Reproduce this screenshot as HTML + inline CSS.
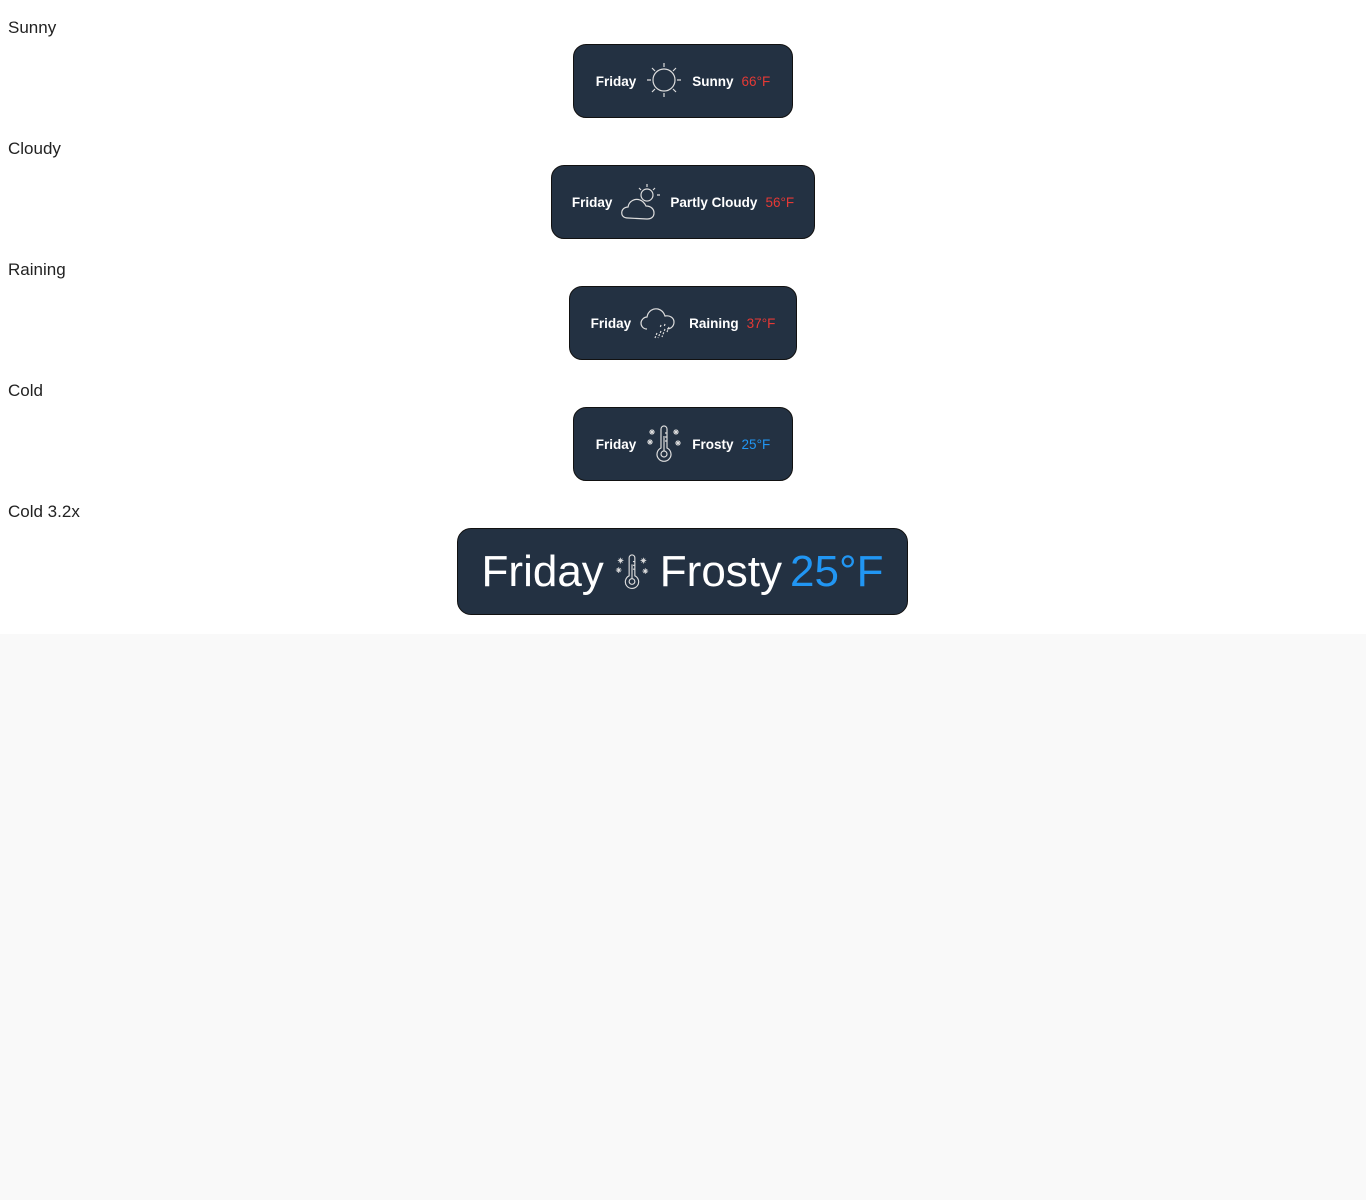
<!DOCTYPE html>
<html><head><meta charset="utf-8"><style>
html,body{margin:0;padding:0;background:#f9f9f9;}
#wrap{position:relative;width:1366px;height:634px;background:#fff;}
.lbl{position:absolute;left:8px;font:17px "Liberation Sans",sans-serif;color:#222;}
.card{position:absolute;box-sizing:border-box;background:#233142;border:1px solid #111;border-radius:13px;display:flex;align-items:center;justify-content:center;font-family:"Liberation Sans",sans-serif;font-weight:bold;font-size:13.5px;color:#fff;}
.card svg{margin:0 8px;}
.red{color:#e53935;font-weight:normal;margin-left:8px}
.blue{color:#2196f3;font-weight:normal;margin-left:8px}
.big{font-size:44px;font-weight:normal;border-radius:14px}
.big svg{margin:0 9px}
</style></head><body><div id="wrap">
<div class="lbl" style="top:18px">Sunny</div>
<div class="card" style="left:573px;top:44px;width:220px;height:74px">
<span>Friday</span>
<svg width="40" height="40" viewBox="0 0 40 40" fill="none" stroke="#ddd" stroke-width="1.2"><circle cx="20" cy="19" r="11"/><path d="M20 2v4M20 32v4M3 19h4M33 19h4M8 7l3 3M32 7l-3 3M8 31l3-3M32 31l-3-3"/></svg>
<span>Sunny</span><span class="red">66°F</span></div>

<div class="lbl" style="top:139px">Cloudy</div>
<div class="card" style="left:551px;top:165px;width:264px;height:74px">
<span>Friday</span>
<svg width="42" height="40" viewBox="0 0 42 40" fill="none" stroke="#ddd" stroke-width="1.2"><circle cx="27" cy="13" r="6"/><path d="M27 2v3M19 6l2 2M35 6l-2 2M37 13h3"/><path d="M8 36c-5 0-7-3-6-7 1-3 4-4 6-4 1-6 7-9 12-7 3 1 5 4 6 6 5 0 8 3 8 7 0 4-3 6-7 6z" fill="#233142"/></svg>
<span>Partly Cloudy</span><span class="red">56°F</span></div>

<div class="lbl" style="top:260px">Raining</div>
<div class="card" style="left:569px;top:286px;width:228px;height:74px">
<span>Friday</span>
<svg width="42" height="40" viewBox="0 0 42 40" fill="none" stroke="#ddd" stroke-width="1.2"><path d="M8 26c-4 0-6-3-6-6 0-3 3-6 6-6 1-6 6-9 11-8 4 1 6 4 7 7 5-1 9 2 9 6 0 4-3 7-7 7"/><path d="M18 30l-2 5M22 28l-3 7M26 26l-3 8M30 24l-2 5M22 22l-1 3M26 21l-1 3" stroke-dasharray="2 1.5"/></svg>
<span>Raining</span><span class="red">37°F</span></div>

<div class="lbl" style="top:381px">Cold</div>
<div class="card" style="left:573px;top:407px;width:220px;height:74px">
<span>Friday</span>
<svg width="40" height="40" viewBox="0 0 40 40" fill="none" stroke="#ddd" stroke-width="1.2"><path d="M17 24V5a3 3 0 0 1 6 0v19a7 7 0 1 1-6 0z"/><circle cx="20" cy="30" r="3"/><path d="M20 27V12M23 9h-2M23 13h-2M23 17h-2"/><path d="M6 6l4 4M10 6l-4 4M8 5v6M5 8h6M30 6l4 4M34 6l-4 4M32 5v6M29 8h6M4 16l4 4M8 16l-4 4M6 15v6M3 18h6M32 17l4 4M36 17l-4 4M34 16v6M31 19h6" stroke-width="0.9"/></svg>
<span>Frosty</span><span class="blue">25°F</span></div>

<div class="lbl" style="top:502px">Cold 3.2x</div>
<div class="card big" style="left:457px;top:528px;width:451px;height:87px">
<span>Friday</span>
<svg width="38" height="40" viewBox="0 0 40 40" fill="none" stroke="#ddd" stroke-width="1.2"><path d="M17 24V5a3 3 0 0 1 6 0v19a7 7 0 1 1-6 0z"/><circle cx="20" cy="30" r="3"/><path d="M20 27V12M23 9h-2M23 13h-2M23 17h-2"/><path d="M6 6l4 4M10 6l-4 4M8 5v6M5 8h6M30 6l4 4M34 6l-4 4M32 5v6M29 8h6M4 16l4 4M8 16l-4 4M6 15v6M3 18h6M32 17l4 4M36 17l-4 4M34 16v6M31 19h6" stroke-width="0.9"/></svg>
<span>Frosty</span><span class="blue" style="margin-left:8px">25°F</span></div>
</div></body></html>
